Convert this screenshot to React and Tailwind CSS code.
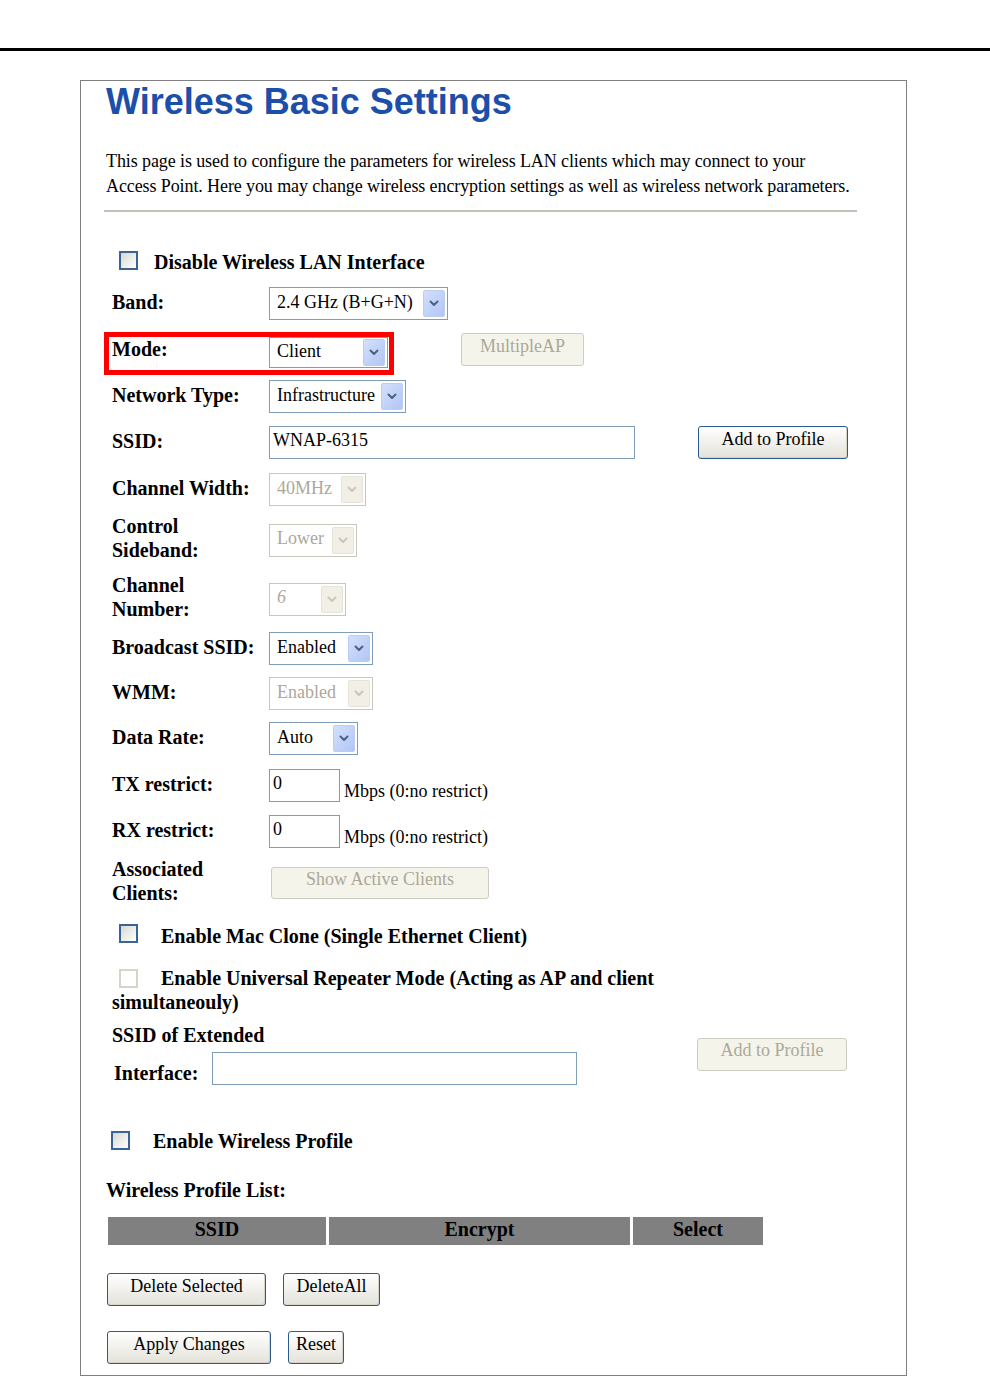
import clsx from 'clsx'

// Wireless Basic Settings – router admin page, XP-style form controls

const serif = "font-['Liberation_Serif','Times_New_Roman',serif]"

function Chevron({ color }) {
  return (
    <svg width="10" height="7" viewBox="0 0 10 7" fill="none">
      <path d="M1.5 1.5 L5 5 L8.5 1.5" stroke={color} strokeWidth="2" strokeLinecap="round" strokeLinejoin="round" />
    </svg>
  )
}

function Select({ w, value, disabled, h = 'h-[33px]' }) {
  return (
    <div
      className={clsx(
        'flex items-center border bg-white pr-[2px]',
        w,
        h,
        disabled ? 'border-[#c9c7ba] text-[#aca899]' : 'border-[#7f9db9] text-black'
      )}
    >
      <span className="flex-1 pl-[7px] pb-[4px] text-[18px] leading-none whitespace-nowrap overflow-hidden">{value}</span>
      <span
        className={clsx(
          'flex items-center justify-center w-[22px] h-[27px] rounded-[2px] border',
          disabled
            ? 'bg-[#f1efe6] border-[#e6e3d8]'
            : 'bg-gradient-to-br from-[#d3e0fc] to-[#b2c6f5] border-[#bccdf5]'
        )}
      >
        <Chevron color={disabled ? '#c9c7ba' : '#4d6185'} />
      </span>
    </div>
  )
}

function TextInput({ w, value }) {
  return (
    <div className={clsx('h-[33px] border border-[#7f9db9] bg-white flex items-start pl-[3px] pt-[2px] text-[18px] leading-[22px]', w)}>
      {value}
    </div>
  )
}

function Button({ w, h = 'h-[33px]', children, disabled }) {
  return (
    <div
      className={clsx(
        'flex items-center justify-center rounded-[3px] border text-[18px] leading-none pb-[8px] whitespace-nowrap',
        w,
        h,
        disabled
          ? 'border-[#cfcdc1] bg-[#f5f4ea] text-[#aca899]'
          : 'border-[#2c5a8c] bg-gradient-to-b from-[#ffffff] to-[#e3e2da] text-black shadow-[inset_-1px_-1px_0_#d6d3c6]'
      )}
    >
      {children}
    </div>
  )
}

function Checkbox({ disabled }) {
  return (
    <span
      className={clsx(
        'inline-block w-[19px] h-[19px] border-[2px] align-middle',
        disabled ? 'border-[#d6d4c9] bg-white' : 'border-[#3a6496] bg-gradient-to-br from-[#d8d8d2] to-[#ffffff]'
      )}
    />
  )
}

function Row({ className, label, children, align = 'items-center' }) {
  return (
    <div className={clsx('flex ml-[31px]', align, className)}>
      <div className="w-[157px] shrink-0 self-center -translate-y-[2px] font-bold text-[20px] leading-[24px]">{label}</div>
      {children}
    </div>
  )
}

export default function App() {
  return (
    <div className={clsx('min-h-[1376px] bg-white text-black', serif)}>
      <div className="pt-[48px]">
        <div className="h-[3px] bg-black" />
      </div>

      <div className="ml-[80px] mt-[29px] w-[827px] h-[1296px] border border-[#808080] overflow-hidden">
        {/* Title */}
        <h1 className="ml-[25px] mt-[3px] h-[36px] text-[36px] leading-[36px] font-bold text-[#1c4fa9] font-['Liberation_Sans',Arial,sans-serif]">
          Wireless Basic Settings
        </h1>

        {/* Description */}
        <p className="ml-[25px] mt-[29px] text-[18px] leading-[25px] tracking-[-0.1px] whitespace-nowrap">
          This page is used to configure the parameters for wireless LAN clients which may connect to your
          <br />
          Access Point. Here you may change wireless encryption settings as well as wireless network parameters.
        </p>

        <div className="ml-[23px] mt-[11px] w-[753px] h-[2px] bg-[#c2c1b8]" />

        {/* Disable Wireless */}
        <div className="ml-[38px] mt-[39px] h-[19px] flex items-center">
          <Checkbox />
          <span className="ml-[16px] pt-[2px] font-bold text-[20px] leading-none">Disable Wireless LAN Interface</span>
        </div>

        <Row className="mt-[17px]" label="Band:">
          <Select w="w-[179px]" value="2.4 GHz (B+G+N)" />
        </Row>

        <div className="relative">
          <Row className="mt-[13px]" align="items-start" label="Mode:">
            <div className="mt-[4px]">
              <Select w="w-[119px]" h="h-[31px]" value="Client" />
            </div>
            <div className="ml-[73px]">
              <Button w="w-[123px]" h="h-[33px]" disabled>
                MultipleAP
              </Button>
            </div>
          </Row>
          <div className="absolute left-[23px] top-[-1px] w-[290px] h-[43px] border-[5px] border-[#ff0000] pointer-events-none" />
        </div>

        <Row className="mt-[12px]" label="Network Type:">
          <Select w="w-[137px]" value="Infrastructure" />
        </Row>

        <Row className="mt-[13px]" label="SSID:">
          <TextInput w="w-[366px]" value="WNAP-6315" />
          <div className="ml-[63px]">
            <Button w="w-[150px]">Add to Profile</Button>
          </div>
        </Row>

        <Row className="mt-[14px]" label="Channel Width:">
          <Select w="w-[97px]" value="40MHz" disabled />
        </Row>

        <Row className="mt-[10px]" label={<>Control<br />Sideband:</>}>
          <Select w="w-[88px]" value="Lower" disabled />
        </Row>

        <Row className="mt-[11px]" label={<>Channel<br />Number:</>}>
          <Select w="w-[77px]" value={<span className="italic">6</span>} disabled />
        </Row>

        <Row className="mt-[9px]" label="Broadcast SSID:">
          <Select w="w-[104px]" value="Enabled" />
        </Row>

        <Row className="mt-[12px]" label="WMM:">
          <Select w="w-[104px]" value="Enabled" disabled />
        </Row>

        <Row className="mt-[12px]" label="Data Rate:">
          <Select w="w-[89px]" value="Auto" />
        </Row>

        <Row className="mt-[14px]" align="items-end" label="TX restrict:">
          <TextInput w="w-[71px]" value="0" />
          <span className="ml-[4px] text-[18px] leading-[22px]">Mbps (0:no restrict)</span>
        </Row>

        <Row className="mt-[13px]" align="items-end" label="RX restrict:">
          <TextInput w="w-[71px]" value="0" />
          <span className="ml-[4px] text-[18px] leading-[22px]">Mbps (0:no restrict)</span>
        </Row>

        <Row className="mt-[11px]" label={<>Associated<br />Clients:</>}>
          <div className="ml-[2px]">
            <Button w="w-[218px]" h="h-[32px]" disabled>
              Show Active Clients
            </Button>
          </div>
        </Row>

        {/* Mac clone */}
        <div className="ml-[38px] mt-[17px] h-[19px] flex items-center">
          <Checkbox />
          <span className="ml-[23px] pt-[4px] font-bold text-[20px] leading-none">
            Enable Mac Clone (Single Ethernet Client)
          </span>
        </div>

        {/* Universal repeater */}
        <div className="ml-[31px] mt-[23px] font-bold text-[20px] leading-[24px]">
          <span className="ml-[7px] inline-flex items-center h-[24px] align-top">
            <Checkbox disabled />
          </span>
          <span className="ml-[23px]">Enable Universal Repeater Mode (Acting as AP and client</span>
          <br />
          simultaneouly)
        </div>

        {/* SSID of extended interface */}
        <div className="flex items-center ml-[31px] mt-[9px]">
          <div className="w-[585px] shrink-0">
            <div className="font-bold text-[20px] leading-[24px]">SSID of Extended</div>
            <div className="flex items-end mt-[5px]">
              <div className="ml-[2px] w-[98px] font-bold text-[20px] leading-[24px]">Interface:</div>
              <TextInput w="w-[365px]" value="" />
            </div>
          </div>
          <Button w="w-[150px]" disabled>
            Add to Profile
          </Button>
        </div>

        {/* Wireless profile */}
        <div className="ml-[30px] mt-[46px] h-[19px] flex items-center">
          <Checkbox />
          <span className="ml-[23px] font-bold text-[20px] leading-none">Enable Wireless Profile</span>
        </div>

        <div className="ml-[25px] mt-[28px] font-bold text-[20px] leading-[24px]">Wireless Profile List:</div>

        <div className="ml-[27px] mt-[15px] flex gap-[3px] h-[28px] font-bold text-[20px] leading-[24px]">
          <div className="w-[218px] bg-[#808080] text-center">SSID</div>
          <div className="w-[301px] bg-[#808080] text-center">Encrypt</div>
          <div className="w-[130px] bg-[#808080] text-center">Select</div>
        </div>

        <div className="ml-[26px] mt-[28px] flex gap-[17px]">
          <Button w="w-[159px]">Delete Selected</Button>
          <Button w="w-[97px]">DeleteAll</Button>
        </div>

        <div className="ml-[26px] mt-[25px] flex gap-[17px]">
          <Button w="w-[164px]">Apply Changes</Button>
          <Button w="w-[56px]">Reset</Button>
        </div>
      </div>
    </div>
  )
}
